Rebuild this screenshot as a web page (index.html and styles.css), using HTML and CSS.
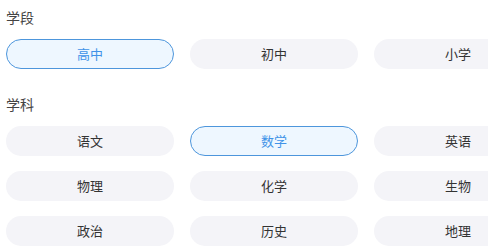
FILE: index.html
```html
<!DOCTYPE html>
<html lang="zh-CN">
<head>
    <meta charset="UTF-8">
    <meta name="viewport" content="width=device-width, initial-scale=1.0">
    <title>选择学段学科</title>
    <link rel="stylesheet" href="styles.css">
</head>
<body>
    <div class="section">
        <h4 class="section-title">学段</h4>
        <div class="option-list">
            <span class="option active">高中</span>
            <span class="option">初中</span>
            <span class="option">小学</span>
        </div>
    </div>

    <div class="section subject">
        <h4 class="section-title">学科</h4>
        <div class="option-list">
            <span class="option">语文</span>
            <span class="option active">数学</span>
            <span class="option">英语</span>
            <span class="option">物理</span>
            <span class="option">化学</span>
            <span class="option">生物</span>
            <span class="option">政治</span>
            <span class="option">历史</span>
            <span class="option">地理</span>
        </div>
    </div>
</body>
</html>
```

FILE: styles.css
```css
* {
    padding: 0;
    margin: 0;
    box-sizing: border-box;
    font-family: "Noto Sans CJK SC", "Noto Sans", sans-serif;
}
body {
    background-color: #fff;
    padding: 7px 0 0 6px;
    overflow: hidden;
}
.section-title {
    font-size: 14px;
    font-weight: normal;
    line-height: 20px;
    color: #444;
    margin-bottom: 12px;
}
.subject {
    margin-top: 25px;
}
.option-list {
    display: grid;
    grid-template-columns: repeat(3, 168px);
    column-gap: 16px;
    row-gap: 15px;
}
.option {
    height: 30px;
    line-height: 30px;
    border-radius: 15px;
    text-align: center;
    font-size: 13px;
    color: #333;
    background-color: #f4f4f8;
    cursor: pointer;
}
.option.active {
    background-color: #eef7ff;
    border: 1px solid #4d96dc;
    line-height: 28px;
    color: #3f93e8;
}
```
